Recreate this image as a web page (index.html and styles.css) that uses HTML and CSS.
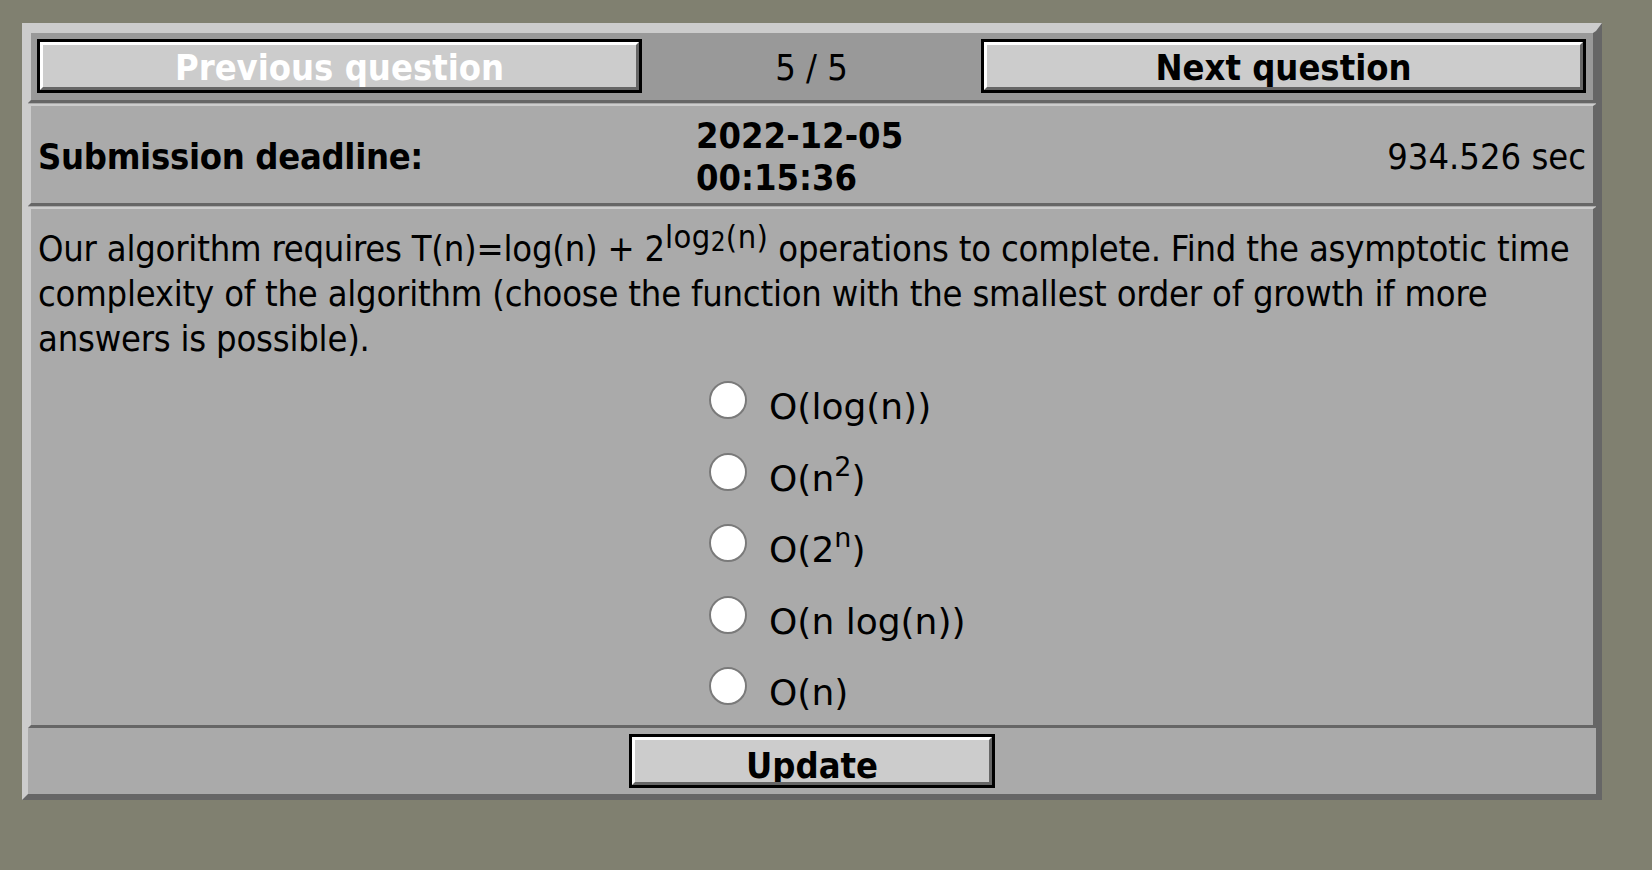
FILE: index.html
```html
<!DOCTYPE html>
<html lang="en">
<head>
<meta charset="utf-8">
<title>Question 5 / 5</title>
<link rel="stylesheet" href="styles.css">
</head>
<body>
<form class="quiz">
  <div class="row nav">
    <button class="btn btn-disabled" type="button"><span class="btn-face">Previous question</span></button>
    <div class="counter">5 / 5</div>
    <button class="btn" type="button"><span class="btn-face">Next question</span></button>
  </div>
  <div class="row deadline">
    <div class="deadline-label">Submission deadline:</div>
    <div class="deadline-date">2022-12-05 00:15:36</div>
    <div class="deadline-remaining">934.526 sec</div>
  </div>
  <div class="row question">
    <p class="question-text">Our algorithm requires T(n)=log(n) + 2<sup>log<sub>2</sub>(n)</sup> operations to complete. Find the asymptotic time complexity of the algorithm (choose the function with the smallest order of growth if more answers is possible).</p>
    <div class="options">
      <label class="option"><input class="radio" type="radio" name="answer" value="1"><span class="option-text">O(log(n))</span></label>
      <label class="option"><input class="radio" type="radio" name="answer" value="2"><span class="option-text">O(n<sup>2</sup>)</span></label>
      <label class="option"><input class="radio" type="radio" name="answer" value="3"><span class="option-text">O(2<sup>n</sup>)</span></label>
      <label class="option"><input class="radio" type="radio" name="answer" value="4"><span class="option-text">O(n log(n))</span></label>
      <label class="option"><input class="radio" type="radio" name="answer" value="5"><span class="option-text">O(n)</span></label>
    </div>
  </div>
  <div class="footer">
    <button class="btn btn-update" type="submit"><span class="btn-face">Update</span></button>
  </div>
</form>
</body>
</html>
```
FILE: styles.css
```css
html, body {
  margin: 0;
  padding: 0;
  background: #808070;
}

body {
  font-family: "DejaVu Sans Condensed", "DejaVu Sans", sans-serif;
  font-stretch: condensed;
  font-size: 36px;
  color: #000;
}

.quiz {
  box-sizing: border-box;
  width: 1580px;
  margin: 23px 0 0 22px;
  border-style: solid;
  border-width: 8px 6px 6px 6px;
  border-color: #cccccc #666666 #666666 #cccccc;
  background: #aaaaaa;
  display: flex;
  flex-direction: column;
}

.row {
  border-style: solid;
  border-width: 2px 3px 3px 3px;
  border-color: #cccccc #666666 #666666 #cccccc;
  background: #aaaaaa;
}

.nav, .deadline {
  margin-bottom: 1px;
}

/* navigation row */
.nav {
  background: #999999;
  display: grid;
  grid-template-columns: 605px 1fr 605px;
  align-items: center;
  padding: 6px 7px 7px 6px;
}

.counter {
  text-align: center;
  line-height: 42px;
  padding-top: 4px;
}

.btn {
  box-sizing: border-box;
  height: 54px;
  margin: 0;
  padding: 0;
  border: 3px solid #000;
  background: #cccccc;
  font-family: inherit;
  font-stretch: inherit;
  font-size: 36px;
  font-weight: bold;
  color: #000;
  cursor: pointer;
}

.btn-face {
  display: block;
  box-sizing: border-box;
  height: 100%;
  overflow: hidden;
  border-style: solid;
  border-width: 3px;
  border-color: #ffffff #666666 #666666 #ffffff;
  padding-top: 2px;
  line-height: 42px;
  text-align: center;
}

.btn-disabled {
  color: #ffffff;
}

/* deadline row */
.deadline {
  display: grid;
  grid-template-columns: 658px 230px 1fr;
  align-items: center;
  padding: 9px 7px 4px 7px;
  line-height: 42px;
}

.deadline-label,
.deadline-date {
  font-weight: bold;
}

.deadline-label {
  letter-spacing: -0.3px;
}

.deadline-remaining {
  text-align: right;
}

/* question row */
.question {
  padding: 17px 7px 0 7px;
}

.question-text {
  margin: 0;
  line-height: 45px;
  letter-spacing: -0.2px;
}

.question-text sup {
  font-size: 0.9em;
  letter-spacing: 0.4px;
  line-height: 0;
  vertical-align: 0.4em;
}

.question-text sub {
  font-size: 0.8em;
  line-height: 0;
  vertical-align: -0.12em;
}

.options {
  margin-top: 14px;
  padding-left: 671px;
  display: flex;
  flex-direction: column;
  gap: 7.6px;
}

.option {
  display: flex;
  align-items: center;
  height: 64px;
  gap: 22px;
  font-family: "DejaVu Sans", sans-serif;
  font-stretch: normal;
}

.radio {
  appearance: none;
  -webkit-appearance: none;
  box-sizing: border-box;
  width: 38px;
  height: 38px;
  margin: 0 0 14px 0;
  border: 2px solid #7a7a7a;
  border-radius: 50%;
  background: #ffffff;
}

.option-text {
  line-height: 42px;
}

.option-text sup {
  font-size: 0.75em;
  line-height: 0;
  vertical-align: 0.55em;
}

/* footer */
.footer {
  display: flex;
  justify-content: center;
  padding: 6px 0;
}

.btn-update {
  width: 366px;
}

.btn-update .btn-face {
  padding-top: 4.5px;
}
```
